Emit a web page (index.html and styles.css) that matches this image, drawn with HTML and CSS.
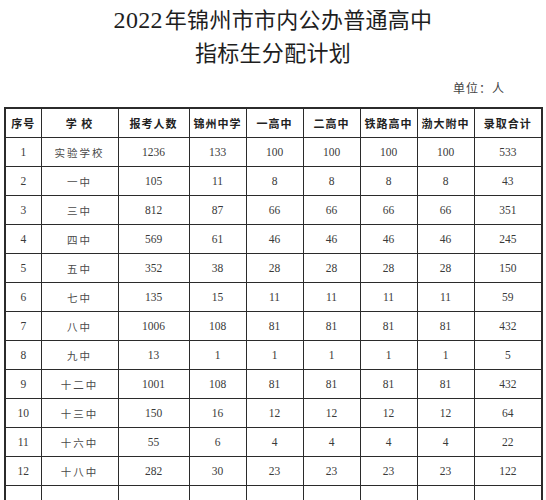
FILE: index.html
```html
<!DOCTYPE html>
<html lang="zh">
<head>
<meta charset="utf-8">
<link rel="stylesheet" href="styles.css">
</head>
<body>
<div class="page">
  <h1 class="title"><span class="yr">2022</span>年锦州市市内公办普通高中<br>指标生分配计划</h1>
  <div class="unit">单位：人</div>
  <table class="plan">
    <colgroup>
      <col class="c1"><col class="c2"><col class="c3"><col class="c4"><col class="c5"><col class="c6"><col class="c7"><col class="c8"><col class="c9">
    </colgroup>
    <thead>
      <tr><th>序号</th><th>学 校</th><th>报考人数</th><th>锦州中学</th><th>一高中</th><th>二高中</th><th>铁路高中</th><th>渤大附中</th><th>录取合计</th></tr>
    </thead>
    <tbody>
      <tr><td>1</td><td class="name">实验学校</td><td>1236</td><td>133</td><td>100</td><td>100</td><td>100</td><td>100</td><td>533</td></tr>
      <tr><td>2</td><td class="name">一中</td><td>105</td><td>11</td><td>8</td><td>8</td><td>8</td><td>8</td><td>43</td></tr>
      <tr><td>3</td><td class="name">三中</td><td>812</td><td>87</td><td>66</td><td>66</td><td>66</td><td>66</td><td>351</td></tr>
      <tr><td>4</td><td class="name">四中</td><td>569</td><td>61</td><td>46</td><td>46</td><td>46</td><td>46</td><td>245</td></tr>
      <tr><td>5</td><td class="name">五中</td><td>352</td><td>38</td><td>28</td><td>28</td><td>28</td><td>28</td><td>150</td></tr>
      <tr><td>6</td><td class="name">七中</td><td>135</td><td>15</td><td>11</td><td>11</td><td>11</td><td>11</td><td>59</td></tr>
      <tr><td>7</td><td class="name">八中</td><td>1006</td><td>108</td><td>81</td><td>81</td><td>81</td><td>81</td><td>432</td></tr>
      <tr><td>8</td><td class="name">九中</td><td>13</td><td>1</td><td>1</td><td>1</td><td>1</td><td>1</td><td>5</td></tr>
      <tr><td>9</td><td class="name">十二中</td><td>1001</td><td>108</td><td>81</td><td>81</td><td>81</td><td>81</td><td>432</td></tr>
      <tr><td>10</td><td class="name">十三中</td><td>150</td><td>16</td><td>12</td><td>12</td><td>12</td><td>12</td><td>64</td></tr>
      <tr><td>11</td><td class="name">十六中</td><td>55</td><td>6</td><td>4</td><td>4</td><td>4</td><td>4</td><td>22</td></tr>
      <tr><td>12</td><td class="name">十八中</td><td>282</td><td>30</td><td>23</td><td>23</td><td>23</td><td>23</td><td>122</td></tr>
      <tr><td></td><td></td><td></td><td></td><td></td><td></td><td></td><td></td><td></td></tr>
    </tbody>
  </table>
</div>
</body>
</html>
```
FILE: styles.css
```css
html, body {
  margin: 0;
  padding: 0;
  background: #fff;
}
.page {
  width: 546px;
  height: 500px;
  overflow: hidden;
  font-family: "Liberation Serif", "Noto Sans CJK SC", serif;
  color: #2a2a2a;
}
.title {
  margin: 0;
  padding-top: 4px;
  height: 66px;
  font-size: 22px;
  font-weight: 400;
  line-height: 33px;
  text-align: center;
  color: #1e1e1e;
  letter-spacing: 0.3px;
}
.title .yr {
  font-size: 24px;
  margin-right: 2px;
}
.unit {
  box-sizing: border-box;
  height: 37px;
  padding-top: 12px;
  line-height: 14px;
  padding-right: 41px;
  text-align: right;
  font-size: 12px;
  color: #444;
  letter-spacing: 1px;
}
.plan {
  margin-left: 4px;
  width: 537px;
  border-collapse: collapse;
  table-layout: fixed;
  border: 2px solid #2b2b2b;
}
.c1 { width: 36px; }
.c2 { width: 77px; }
.c3 { width: 71px; }
.c4 { width: 57px; }
.c5 { width: 57px; }
.c6 { width: 57px; }
.c7 { width: 57px; }
.c8 { width: 57px; }
.c9 { width: 68px; }
.plan th, .plan td {
  border: 1.5px solid #2b2b2b;
  height: 28px;
  padding: 0;
  text-align: center;
  vertical-align: middle;
}
.plan th {
  font-size: 11px;
  font-weight: 700;
  letter-spacing: 1px;
  color: #222;
}
.plan td {
  font-size: 11.5px;
  color: #3a3a3a;
}
.plan td.name {
  font-size: 10.5px;
  letter-spacing: 2px;
  font-weight: 400;
  color: #4a4a4a;
}
```
